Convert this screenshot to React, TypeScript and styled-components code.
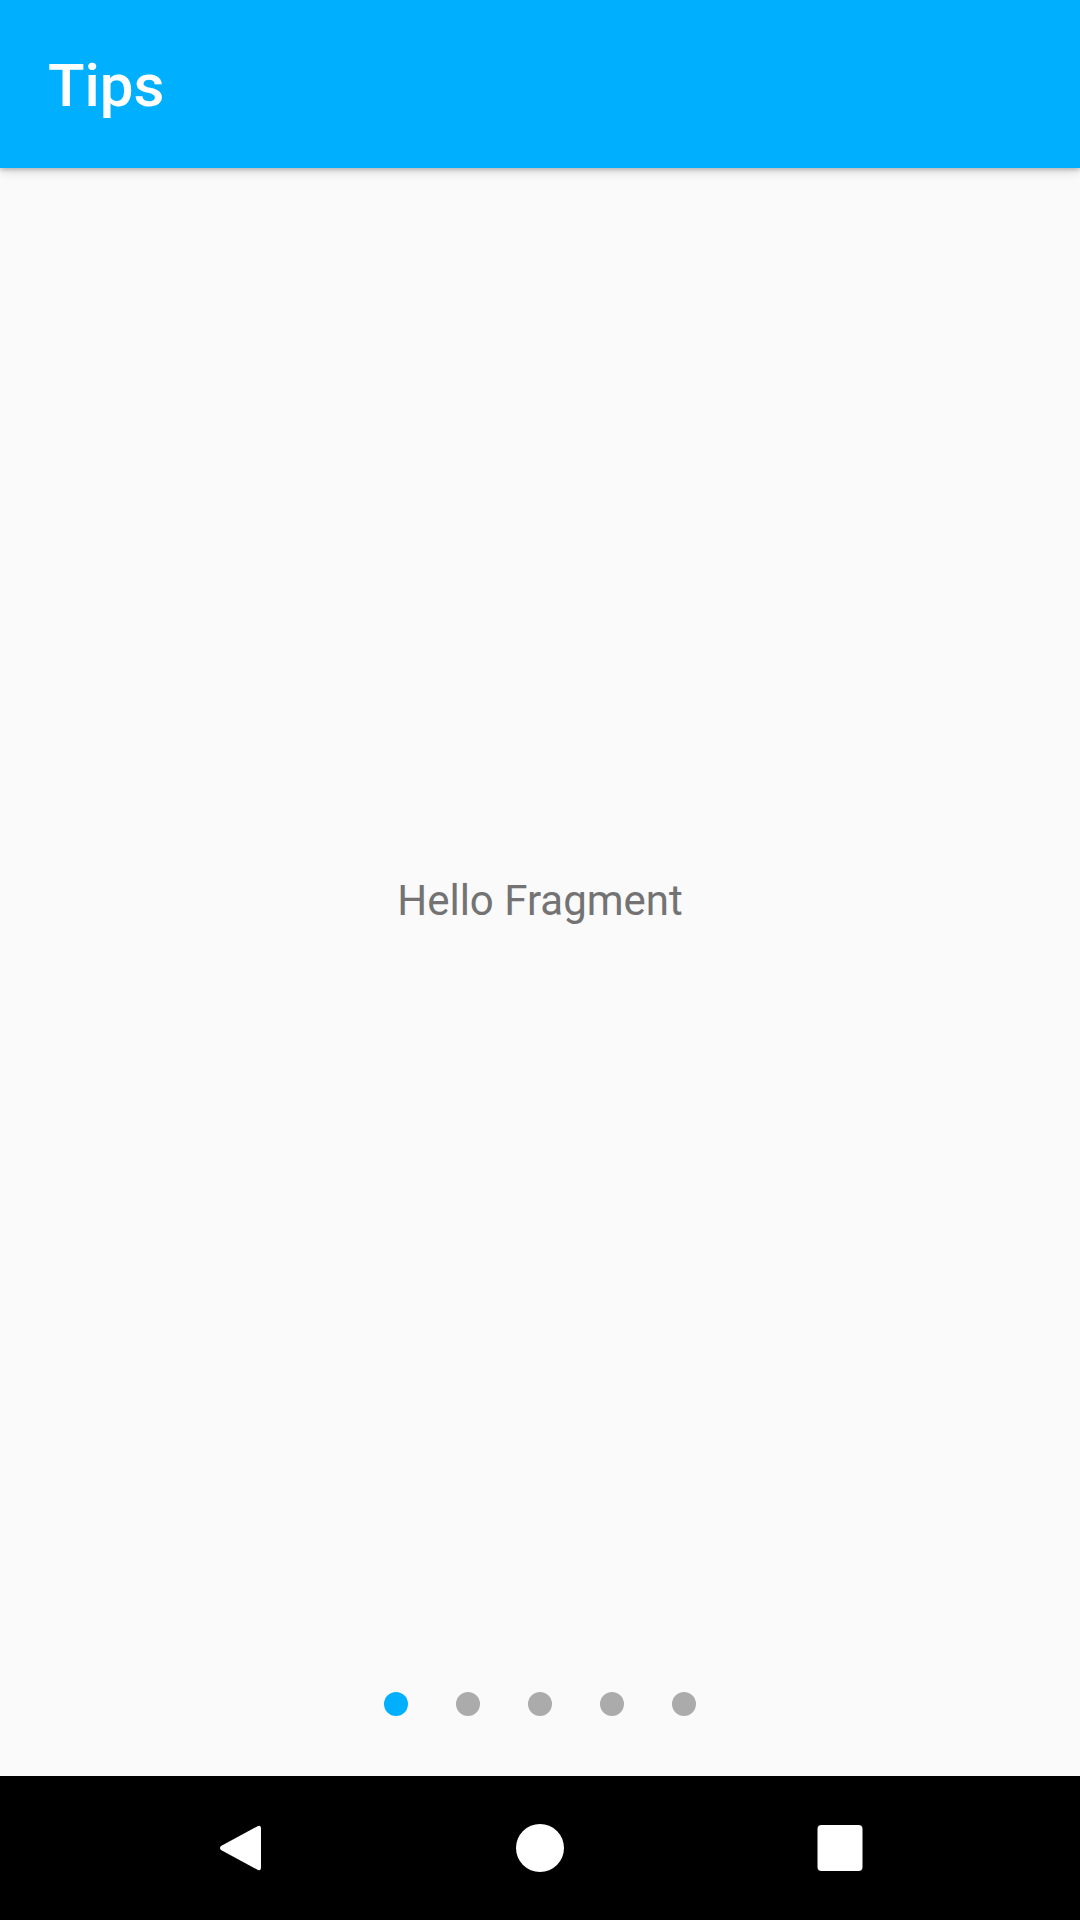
import React from "react";
import styled, { createGlobalStyle } from "styled-components";

const GlobalStyle = createGlobalStyle`
  html, body {
    margin: 0;
    padding: 0;
    background: #fafafa;
    font-family: Roboto, "Noto Sans", "Liberation Sans", sans-serif;
  }
  * { box-sizing: border-box; }
`;

const Screen = styled.div`
  width: 1080px;
  height: 1920px;
  display: flex;
  flex-direction: column;
  background: #fafafa;
  overflow: hidden;
`;

const AppBar = styled.header`
  position: relative;
  z-index: 1;
  height: 168px;
  flex: 0 0 168px;
  background: #00b0ff;
  display: flex;
  align-items: center;
  padding: 4px 0 0 48px;
  box-shadow: 0 2px 4px rgba(0, 0, 0, 0.2), 0 4px 10px rgba(0, 0, 0, 0.12);
`;

const Title = styled.h1`
  margin: 0;
  color: #ffffff;
  font-family: Roboto, "Noto Sans", sans-serif;
  font-weight: 500;
  font-size: 60px;
  line-height: 1;
`;

const Pager = styled.main`
  flex: 1 1 auto;
  display: flex;
  align-items: center;
  justify-content: center;
`;

const Message = styled.p`
  margin: 0;
  color: #737373;
  font-family: Roboto, "Noto Sans", sans-serif;
  font-size: 42px;
  font-weight: 400;
`;

const Indicator = styled.div`
  flex: 0 0 144px;
  display: flex;
  align-items: center;
  justify-content: center;
  gap: 48px;
`;

const Dot = styled.span<{ $active?: boolean }>`
  width: 24px;
  height: 24px;
  border-radius: 50%;
  background: ${(p) => (p.$active ? "#00b0ff" : "#ababab")};
`;

const NavBar = styled.nav`
  flex: 0 0 144px;
  background: #000000;
  display: grid;
  grid-template-columns: repeat(3, 300px);
  justify-content: center;
  align-items: center;
`;

const NavCell = styled.div`
  display: flex;
  align-items: center;
  justify-content: center;
  height: 144px;
`;

const BackIcon = () => (
  <svg width="42" height="48" viewBox="0 0 42 48">
    <path
      d="M39 2 Q42 1 42 5 L42 43 Q42 47 39 46 L2 26 Q0 24 2 22 Z"
      fill="#ffffff"
    />
  </svg>
);

const HomeIcon = () => (
  <svg width="48" height="48" viewBox="0 0 48 48">
    <circle cx="24" cy="24" r="24" fill="#ffffff" />
  </svg>
);

const RecentsIcon = () => (
  <svg width="46" height="46" viewBox="0 0 46 46">
    <rect x="0.5" y="0" width="45" height="46" rx="4" fill="#ffffff" />
  </svg>
);

export default function App() {
  return (
    <>
      <GlobalStyle />
      <Screen>
        <AppBar>
          <Title>Tips</Title>
        </AppBar>
        <Pager>
          <Message>Hello Fragment</Message>
        </Pager>
        <Indicator>
          <Dot $active />
          <Dot />
          <Dot />
          <Dot />
          <Dot />
        </Indicator>
        <NavBar>
          <NavCell>
            <BackIcon />
          </NavCell>
          <NavCell>
            <HomeIcon />
          </NavCell>
          <NavCell>
            <RecentsIcon />
          </NavCell>
        </NavBar>
      </Screen>
    </>
  );
}
